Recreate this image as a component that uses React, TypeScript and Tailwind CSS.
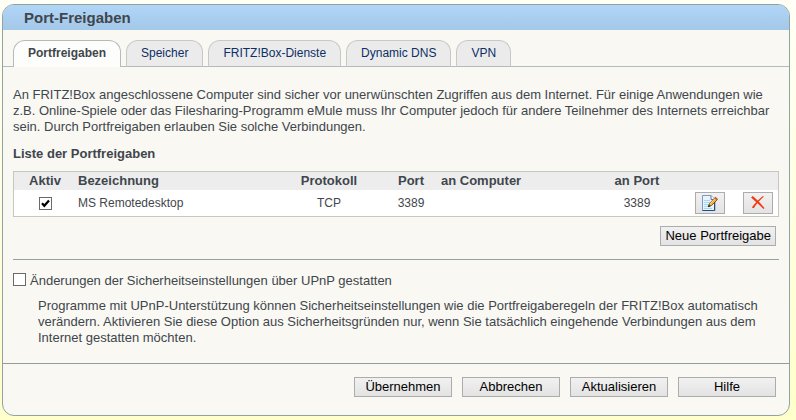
import React from "react";

const tabs = ["Portfreigaben", "Speicher", "FRITZ!Box-Dienste", "Dynamic DNS", "VPN"];

const buttonStyle =
  "h-5 border border-[#acacac] bg-linear-to-b from-[#f1f1f1] to-[#e3e3e3] text-[13px] leading-4 text-black";

const iconButtonStyle =
  "ml-auto flex h-[22px] w-[30px] items-center justify-center border border-[#acacac] bg-linear-to-b from-[#f1f1f1] to-[#e3e3e3]";

type CheckboxProps = {
  id: string;
  label?: string;
  defaultChecked?: boolean;
};

const Checkbox = ({ id, label, defaultChecked }: CheckboxProps) => (
  <span className="inline-grid size-[13px] shrink-0">
    <input
      type="checkbox"
      id={id}
      aria-label={label}
      defaultChecked={defaultChecked}
      className="peer col-start-1 row-start-1 size-[13px] appearance-none border border-[#6a6a6a] bg-white"
    />
    <svg
      viewBox="0 0 13 13"
      className="pointer-events-none invisible col-start-1 row-start-1 size-[13px] peer-checked:visible"
    >
      <path d="M3 6.2 5.3 8.8 10 3.5" fill="none" stroke="#000" strokeWidth="2.2" />
    </svg>
  </span>
);

const EditIcon = () => (
  <svg viewBox="0 0 16 16" className="size-4">
    <path d="M.5.5h8.500l4 4v11H.5z" fill="#e6f5fd" stroke="#7c99bf" />
    <path d="M12.500 5v10.500H.5" fill="none" stroke="#2c4a7c" />
    <path d="M9 .5v4h3.500" fill="#fff" stroke="#56749f" />
    <path d="M2 5.500h6M2 7.500h6M2 9.500h5M2 11.500h4M2 13.500h8" stroke="#a5d8f3" />
    <path d="m6.500 11.500 1-3 5.700-6 2.200 2-5.900 6z" fill="#f6b13d" stroke="#6b3a12" strokeWidth=".8" />
    <path d="m8.200 8.700 5-5.300" stroke="#ffe391" />
    <path d="m12.300 3 1.200-1.300 2.200 2-1.200 1.300z" fill="#d4582a" />
    <path d="m6 12.200.8-2.400 1.700 1.500z" fill="#151515" />
  </svg>
);

const DeleteIcon = () => (
  <svg viewBox="0 0 16 16" className="size-4">
    <path d="M1 2.500 2.800 1C6.500 4 11 8.500 14.500 13.200l-1 .8C9.500 9.800 5 6 1 2.500z" fill="#f03a12" />
    <path d="M13 1l.8.8C10 5 6.500 8.600 3.800 13.200L1.800 12.500C5 8 9 4 13 1z" fill="#f03a12" />
  </svg>
);

const Tabs = () => (
  <nav className="mt-2.5 flex items-end">
    <div className="w-2.5 self-stretch border-b border-[#b4bbc0]" />
    {tabs.map((tab, i) => (
      <React.Fragment key={tab}>
        {i > 0 && <div className="w-[5px] self-stretch border-b border-[#b4bbc0]" />}
        <button
          type="button"
          className={
            i === 0
              ? "h-[27px] rounded-t-xl border border-b-0 border-[#b4bbc0] bg-[#fdfdfb] px-3.5 pb-0.5 text-xs font-bold"
              : "h-[27px] rounded-t-xl border border-[#c8c8c8] border-b-[#b4bbc0] bg-[#ebebeb] px-3.5 pb-0.5 text-xs text-[#0b2f66]"
          }
        >
          {tab}
        </button>
      </React.Fragment>
    ))}
    <div className="flex-1 self-stretch border-b border-[#b4bbc0]" />
  </nav>
);

const PortTable = () => (
  <table className="w-full table-fixed border-separate border-spacing-0 border border-[#c6c7bf] bg-white">
    <colgroup>
      <col className="w-[62px]" />
      <col />
      <col className="w-[120px]" />
      <col className="w-11" />
      <col className="w-[170px]" />
      <col className="w-[68px]" />
      <col className="w-[54px]" />
      <col className="w-[53px]" />
    </colgroup>
    <thead>
      <tr className="h-[18px] bg-[#ededed] text-[13px] leading-4">
        <th>Aktiv</th>
        <th className="pl-0.5 text-left">Bezeichnung</th>
        <th>Protokoll</th>
        <th>Port</th>
        <th className="pl-2 text-left">an Computer</th>
        <th>an Port</th>
        <td />
        <td />
      </tr>
    </thead>
    <tbody>
      <tr className="h-[26px] text-xs">
        <td>
          <div className="flex justify-center">
            <Checkbox id="rule-active" label="Aktiv: MS Remotedesktop" defaultChecked />
          </div>
        </td>
        <td className="pl-0.5">MS Remotedesktop</td>
        <td className="text-center">TCP</td>
        <td className="text-center">3389</td>
        <td />
        <td className="text-center">3389</td>
        <td>
          <button type="button" aria-label="Bearbeiten" className={iconButtonStyle}>
            <EditIcon />
          </button>
        </td>
        <td className="pr-[5px]">
          <button type="button" aria-label="Löschen" className={iconButtonStyle}>
            <DeleteIcon />
          </button>
        </td>
      </tr>
    </tbody>
  </table>
);

const App = () => {
  return (
    <div className="min-h-screen bg-linear-to-b from-[#fffff6] to-[#ffffcc] pt-1 pr-1.5 pb-1 pl-0.5 font-['Liberation_Sans',Arial,sans-serif] text-[13px] leading-4 text-[#3f464c]">
      <main className="overflow-hidden rounded-xl border border-[#8fa3a0] bg-[#f9f8f3]">
        <h1 className="h-[25px] bg-linear-to-b from-[#b0d5f7] to-[#a4c8e8] pl-[21px] text-[15px] leading-[25px] font-bold">
          Port-Freigaben
        </h1>

        <Tabs />

        <section className="px-2.5 pt-5">
          <p>
            An FRITZ!Box angeschlossene Computer sind sicher vor unerwünschten Zugriffen aus dem Internet. Für einige Anwendungen wie
            <br />
            z.B. Online-Spiele oder das Filesharing-Programm eMule muss Ihr Computer jedoch für andere Teilnehmer des Internets erreichbar
            <br />
            sein. Durch Portfreigaben erlauben Sie solche Verbindungen.
          </p>
          <h2 className="mt-[11px] mb-[9px] font-bold">Liste der Portfreigaben</h2>
          <PortTable />
          <div className="mt-[9px] flex justify-end pr-[3px]">
            <button type="button" className={`${buttonStyle} px-1`}>
              Neue Portfreigabe
            </button>
          </div>
          <hr className="mt-[13px] border-[#8fa3a0]" />

          <div className="mt-[13px] flex items-start gap-1">
            <Checkbox id="upnp" />
            <label htmlFor="upnp">Änderungen der Sicherheitseinstellungen über UPnP gestatten</label>
          </div>
          <p className="mt-[9px] pl-[25px]">
            Programme mit UPnP-Unterstützung können Sicherheitseinstellungen wie die Portfreigaberegeln der FRITZ!Box automatisch
            <br />
            verändern. Aktivieren Sie diese Option aus Sicherheitsgründen nur, wenn Sie tatsächlich eingehende Verbindungen aus dem
            <br />
            Internet gestatten möchten.
          </p>
        </section>

        <footer className="mt-[17px] flex justify-end gap-2.5 border-t border-[#929da3] pt-[13px] pr-[13px] pb-[18px]">
          <button type="button" className={`${buttonStyle} w-[98px]`}>Übernehmen</button>
          <button type="button" className={`${buttonStyle} w-[98px]`}>Abbrechen</button>
          <button type="button" className={`${buttonStyle} w-[98px]`}>Aktualisieren</button>
          <button type="button" className={`${buttonStyle} w-[98px]`}>Hilfe</button>
        </footer>
      </main>
    </div>
  );
};

export default App;
